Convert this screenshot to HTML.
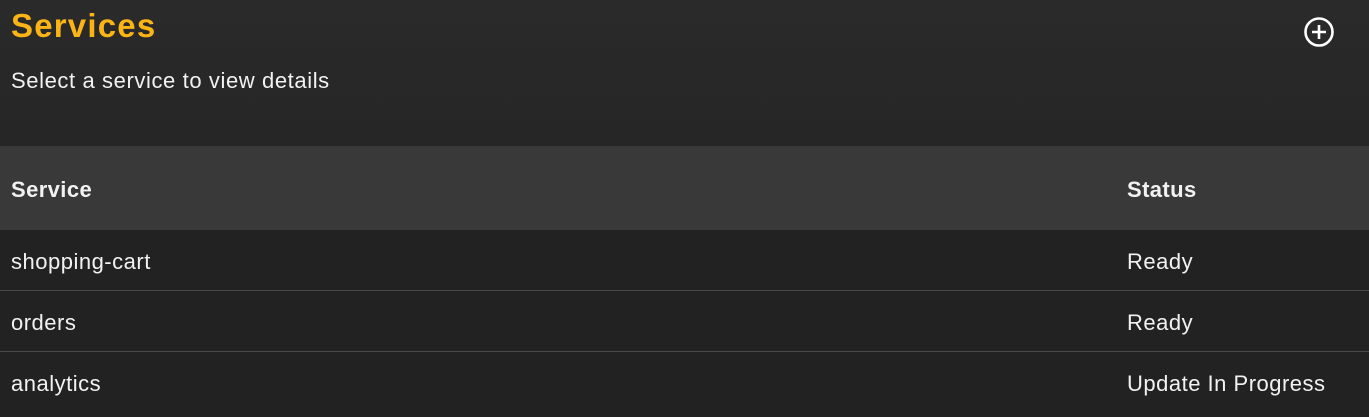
<!DOCTYPE html>
<html><head><style>
body{margin:0;width:1369px;height:417px;overflow:hidden;background:#212121;font-family:"Liberation Sans",sans-serif;color:#f2f2f2}
.top{position:absolute;left:0;top:0;width:1369px;height:146px;background:linear-gradient(#2a2a2a,#262626)}
h1{position:absolute;left:11px;top:7px;margin:0;font-size:33px;font-weight:bold;color:#fbb416;letter-spacing:1.2px}
.sub{position:absolute;left:11px;top:68px;font-size:22px;letter-spacing:0.6px}
.th{position:absolute;top:146px;height:84px;width:1369px;background:#393939}
.row{position:absolute;left:0;width:1369px;height:60px;background:#222;border-bottom:1px solid #4a4a4a}
.t{position:absolute;font-size:22px;white-space:nowrap;letter-spacing:0.5px}
.b{font-weight:bold;letter-spacing:0.4px}
</style></head><body>
<div class="top"></div>
<h1>Services</h1>
<div class="sub">Select a service to view details</div>
<svg style="position:absolute;left:1302px;top:15px" width="34" height="34" viewBox="0 0 34 34"><circle cx="17" cy="17" r="13.5" fill="none" stroke="#fff" stroke-width="2.6"/><path d="M17 10v14M10 17h14" stroke="#fff" stroke-width="2.6"/></svg>
<div class="th"></div>
<div class="t b" style="left:11px;top:177px">Service</div>
<div class="t b" style="left:1127px;top:177px">Status</div>
<div class="row" style="top:230px"></div>
<div class="row" style="top:291px"></div>
<div class="row" style="top:352px;border:none;height:65px"></div>
<div class="t" style="left:11px;top:249px">shopping-cart</div>
<div class="t" style="left:1127px;top:249px">Ready</div>
<div class="t" style="left:11px;top:310px">orders</div>
<div class="t" style="left:1127px;top:310px">Ready</div>
<div class="t" style="left:11px;top:371px">analytics</div>
<div class="t" style="left:1127px;top:371px">Update In Progress</div>
</body></html>
